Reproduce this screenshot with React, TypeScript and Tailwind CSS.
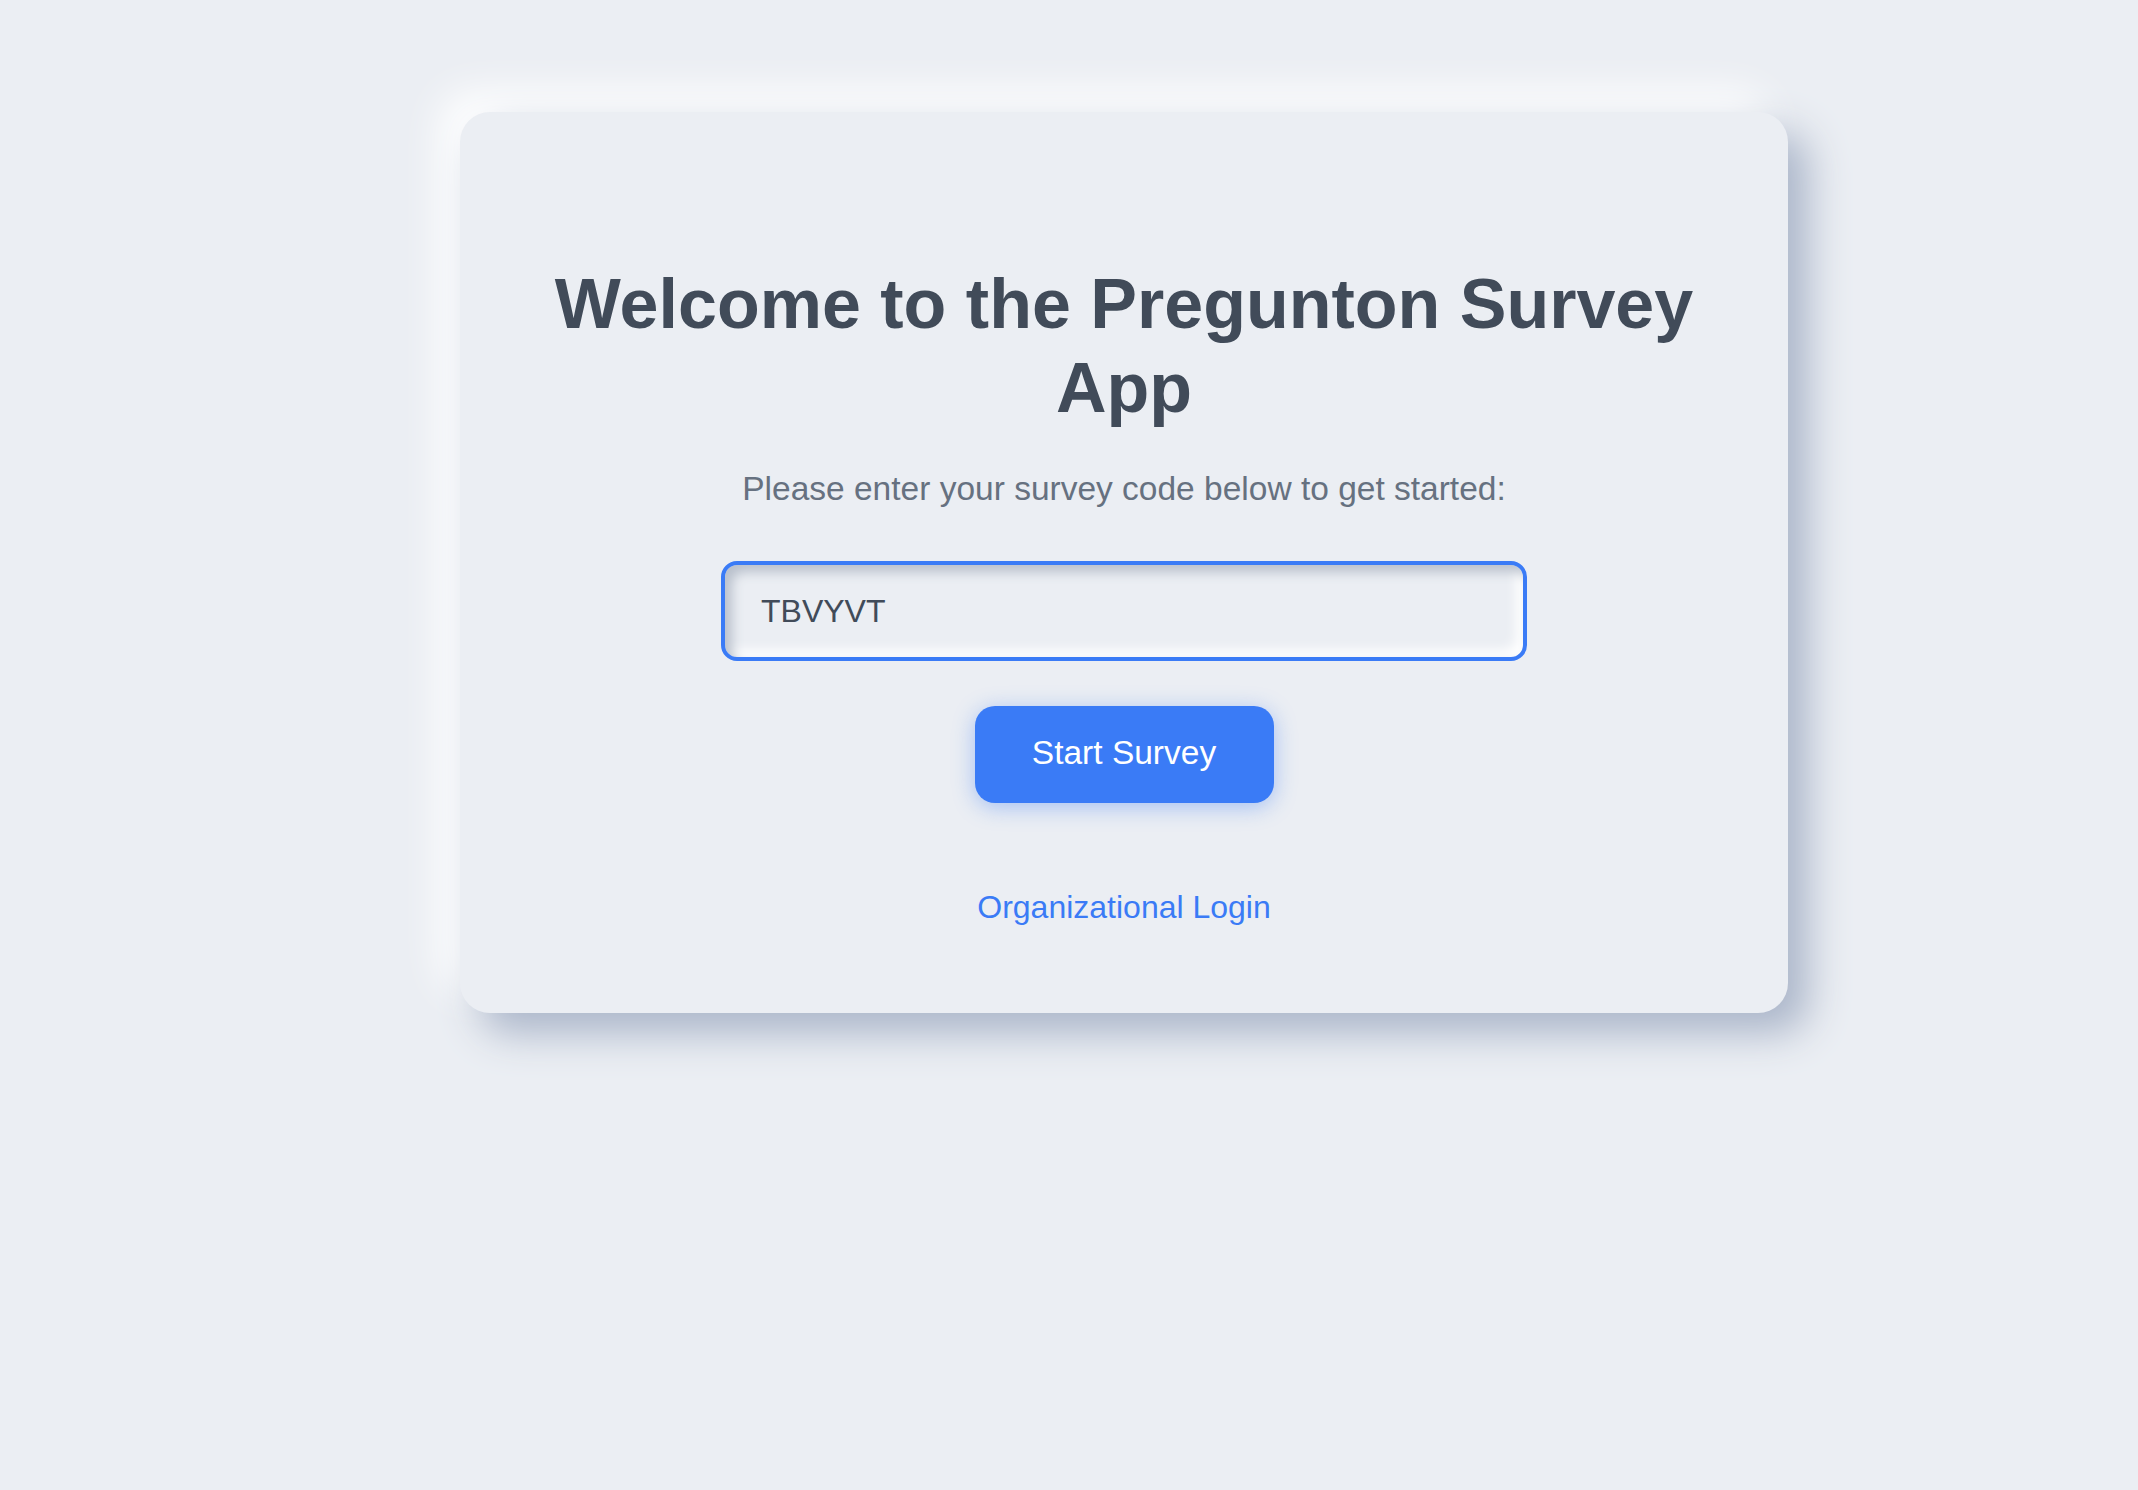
import React, { useState } from 'react';

const App = () => {
  const [code, setCode] = useState('TBVYVT');

  return (
    <div
      className="min-h-screen w-full bg-[#ebeef3] pl-[460px] pt-[112px]"
      style={{ fontFamily: '"Liberation Sans", Arial, sans-serif' }}
    >
      {/* Card */}
      <div className="w-[1328px] rounded-[30px] bg-[#ebeef3] px-[80px] pt-[150px] pb-[87px] flex flex-col items-center shadow-[20px_20px_40px_#aab5c9,-20px_-20px_40px_#ffffff]">
        <h1 className="text-center text-[70px] leading-[84px] font-bold text-[#414b59] max-w-[1160px]">
          Welcome to the Pregunton Survey App
        </h1>

        <p className="mt-[40px] text-[33.5px] leading-[37px] text-[#667180]">
          Please enter your survey code below to get started:
        </p>

        <input
          value={code}
          onChange={(e) => setCode(e.target.value)}
          autoFocus
          className="mt-[54px] h-[100px] w-[806px] rounded-[16px] border-4 border-[#3a7bf6] bg-[#ebeef3] px-[36px] text-[32px] text-[#414b59] outline-none caret-[#414b59] shadow-[inset_7px_7px_12px_#b9c0cc,inset_-7px_-7px_12px_#ffffff]"
        />

        <button className="mt-[45px] h-[97px] w-[299px] rounded-[20px] bg-[#3a7bf6] pb-[3px] text-[33.5px] text-white shadow-[0_4px_22px_rgba(58,123,246,0.4)]">
          Start Survey
        </button>

        <a href="#" className="mt-[86px] text-[32px] leading-[37px] text-[#3a7bf6]">
          Organizational Login
        </a>
      </div>
    </div>
  );
};

export default App;
